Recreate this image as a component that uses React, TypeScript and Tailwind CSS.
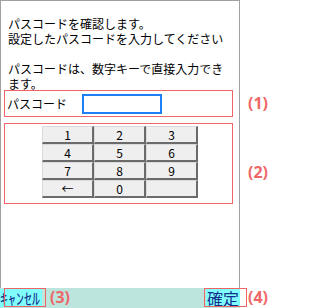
const keys = ["1", "2", "3", "4", "5", "6", "7", "8", "9", "←", "0", ""];

const jp = { fontFamily: '"Noto Sans CJK JP", "Liberation Sans", sans-serif' };

function Key({ label }: { label: string }) {
  return (
    <div className="flex h-[18px] w-[52px] items-center justify-center border-t border-l border-b-2 border-r-2 border-t-[#dadada] border-l-[#dadada] border-b-[#6b6b6b] border-r-[#6b6b6b] bg-[#efefef] text-[12px] leading-none text-black">
      {label}
    </div>
  );
}

function Note({ text, className }: { text: string; className: string }) {
  return (
    <span
      className={`absolute text-[16px] font-bold leading-none text-[#ef6767] ${className}`}
      style={{ fontFamily: '"Open Sans", "Liberation Sans", sans-serif' }}
    >
      {text}
    </span>
  );
}

export default function App() {
  return (
    <div className="relative h-[308px] w-[270px] overflow-hidden bg-white" style={jp}>
      <div className="flex h-full w-[240px] flex-col">
        {/* device screen */}
        <div className="flex h-[288px] flex-col border-t border-l border-r border-[#a0a0a0]">
          <div className="h-[89px] pl-[7px] pt-[15px] text-[12px] leading-[15px] text-black">
            <p>パスコードを確認します。</p>
            <p>設定したパスコードを入力してください</p>
            <p>&nbsp;</p>
            <p className="w-[222px]">パスコードは、数字キーで直接入力できます。</p>
          </div>

          <section className="ml-[3px] flex h-[27px] w-[229px] items-center border border-[#ef6464]">
            <span className="w-[77px] pl-[2px] text-[12px] leading-none text-black">パスコード</span>
            <div className="h-[20px] w-[80px] border-2 border-[#1f80f5] bg-white" />
          </section>

          <section className="ml-[3px] mt-[6px] h-[81px] w-[229px] border border-[#ef6464] pt-[2px] pl-[37px]">
            <div className="grid w-[156px] grid-cols-3">
              {keys.map((k, i) => (
                <Key key={i} label={k} />
              ))}
            </div>
          </section>
        </div>

        {/* soft key bar */}
        <div className="flex h-[20px] items-center justify-between bg-[#bce5dd] text-[16px] leading-[18px] text-[#14308c]">
          <span className="bg-[#80ffff] pr-[2px]">ｷｬﾝｾﾙ</span>
          <span className="bg-[#80ffff] px-[1px]">確定</span>
        </div>
      </div>

      {/* annotation overlays */}
      <div className="absolute left-[4px] top-[288px] h-[19px] w-[42px] border border-[#ef6464]" />
      <div className="absolute left-[204px] top-[288px] h-[19px] w-[43px] border border-[#ef6464]" />
      <Note text="(1)" className="left-[248px] top-[95px]" />
      <Note text="(2)" className="left-[248px] top-[164px]" />
      <Note text="(3)" className="left-[50px] top-[289px]" />
      <Note text="(4)" className="left-[248px] top-[289px]" />
    </div>
  );
}
